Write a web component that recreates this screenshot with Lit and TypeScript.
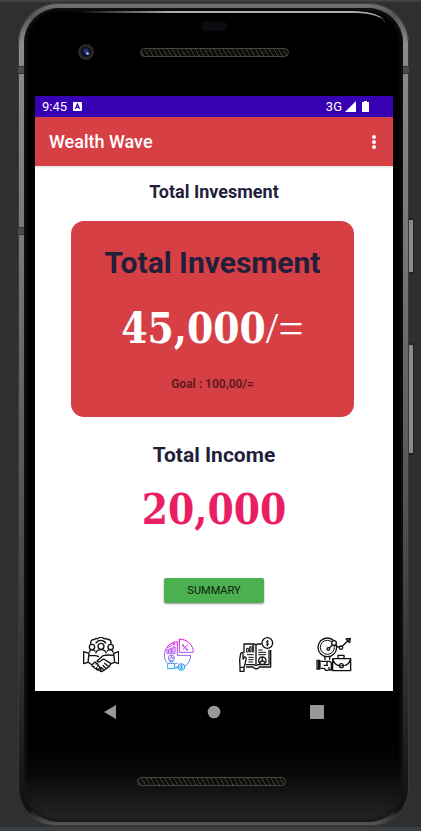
import { LitElement, html, css, svg } from "lit";
import { customElement } from "lit/decorators.js";

const handshake = svg`
  <g stroke-width="4">
    <path d="M63 57c-3-6 1-11 6-14 4 3 7-1 9-3 4 2 6 2 8-1 4-3 9-3 13 0 2 3 5 3 8 1 3 3 5 5 10 3 5 3 8 8 5 14"/>
    <path d="M77 55c4-7 9-9 15-9s12 3 16 9"/>
    <circle cx="93" cy="64" r="9"/><circle cx="66" cy="66" r="8"/><circle cx="122" cy="66" r="8"/>
    <path d="M77 85c2-7 7-11 16-11s14 4 16 11M57 83c1-4 3-8 9-9 5 0 8 2 10 5M130 83c-1-4-3-8-9-9-5 0-8 2-10 5"/>
    <path d="M41 80l16 5-3 27-13 4zM146 80l-15 5 3 27 12 4z"/>
    <path d="M57 92h20l10 3M54 111l12 9M131 91c-14-2-24-1-32 1l-18 16c3 5 9 3 13-2l7-4 22 14-6 9-15 11-8 4-8-5-9-2"/>
    <path d="M66 120l7-8c5-2 7 2 5 5 5-2 9 1 5 6 5-1 8 3 5 7 5 0 7 4 3 8M66 120c0 5 3 6 6 4-1 6 4 8 8 4 0 6 4 7 8 3M123 116l11-4M103 114l13 11M98 121l11 10M92 126l10 9"/>
  </g>`;

const analytics = svg`
  <defs>
    <linearGradient id="tint" gradientUnits="userSpaceOnUse" x1="325" y1="40" x2="325" y2="138">
      <stop offset="0" stop-color="#f400e0"/><stop offset=".5" stop-color="#a05cf0"/>
      <stop offset="1" stop-color="#00b4e6"/>
    </linearGradient>
  </defs>
  <g stroke="url(#tint)" stroke-width="3">
    <path d="M322 50c-22 1-38 18-39 40 0 9 3 17 8 23M322 50v41h40c0 14-7 26-17 32M316 126h14"/>
    <path d="M328 42v40h42c0-22-18-39-42-40z"/>
    <path d="M338 61l14 13M353 60l-15 14"/><circle cx="339" cy="61" r="2"/><circle cx="351" cy="74" r="2"/>
    <path d="M291 86v-12h5v12zM300 86v-16h5v16zM309 86v-20h6v20zM292 68l12-6 8-6M308 55h6v6"/>
    <circle cx="304" cy="99" r="9"/><path d="M304 91v8h8M299 103l5-4"/>
    <path d="M293 115h20v16h-20zM313 118c6-4 8-4 12-1M313 129h10M298 110h12"/>
    <circle cx="334" cy="126" r="10"/><path d="M338 121c-6-3-9 3-4 4 7 1 5 8-4 5M334 118v16"/>
  </g>`;

const report = svg`
  <g stroke-width="4">
    <path d="M57 84V57h32l4 4 4-4h13M132 74v45M137 75v51h-35c-1 7-15 7-17 0H63M93 61v57M62 119h27l4 3 4-3h35"/>
    <circle cx="127" cy="54" r="16"/><path d="M131 49c-6-4-10 4-4 5 7 1 4 9-4 5M127 45v19" stroke-width="3"/>
    <path d="M65 81V70h5v11zM74 81V65h4v16zM82 81V61h4v20z" stroke-width="3"/>
    <path d="M66 89h20M70 97h16M70 104h16M70 111h14M100 75h13M100 82h23M100 89h23" stroke-width="3"/>
    <circle cx="112" cy="107" r="11"/><path d="M112 96v11l9 5M112 107l-9 6"/>
    <path d="M45 139v-14l-1-21 3-18c3-6 8-3 7 3v13l3-4c4-5 8 0 6 5l-3 14-3 10v12zM45 127h12"/>
  </g>`;

const career = svg`
  <g stroke-width="4">
    <circle cx="307" cy="67" r="28"/><circle cx="307" cy="67" r="21" stroke-width="3"/>
    <circle cx="310" cy="72" r="4"/><path d="M313 69l10-10"/>
    <path d="M331 60c4 5 8 6 12 7M352 64l22-22"/>
    <circle cx="327" cy="54" r="7" fill="#fff"/><circle cx="348" cy="68" r="5" fill="#fff"/>
    <path d="M363 42l13-2-2 13zM300 95v10M314 95v9"/>
    <path d="M276 106h9v26h-9zM288 109h26l5 4v22h-7v-9M288 130h10l4 6h8M296 121h13M306 109v12M281 106v26"/>
    <path d="M323 101h54v36h-54zM339 100v-9h18v9M323 102c4 14 10 18 19 20M377 102c-4 14-10 18-19 20"/>
    <circle cx="349" cy="122" r="6"/><path d="M343 122h12" stroke-width="3"/>
  </g>`;

const shortcuts = [
  { label: "Partners", box: "39 36 108 108", art: handshake },
  { label: "Analytics", box: "273 36 108 108", art: analytics },
  { label: "Reports", box: "39 36 108 108", art: report },
  { label: "Career", box: "273 36 108 108", art: career },
];

@customElement("wealth-screen")
class WealthScreen extends LitElement {
  static styles = css`
    :host { display: flex; flex-direction: column; flex: 1; background: #fff; color: #231f3b; }
    * { box-sizing: border-box; }
    h1, h2, p { margin: 0; }
    button { border: 0; padding: 0; background: none; font: inherit; color: inherit; }
    svg { display: block; }
    .status { display: flex; align-items: center; height: 21px; padding: 0 24px 0 7px; background: #3700b3; color: #fff; font-size: 13px; line-height: 20px; }
    .status .app { margin-left: 6px; }
    .status .net { margin-left: auto; }
    .status .signal { margin-left: 3px; }
    .status .battery { margin-left: 6px; }
    .bar { display: flex; align-items: center; justify-content: space-between; height: 49px; padding: 0 8px 0 14px; background: #d64045; color: #fff; box-shadow: 0 1px 3px #0002; }
    .bar h1 { font-size: 18px; line-height: 24px; font-weight: 500; }
    .more { display: flex; justify-content: center; width: 22px; height: 24px; align-items: center; }
    main { display: flex; flex: 1; flex-direction: column; align-items: center; text-align: center; }
    h2 { font-weight: 700; }
    .heading { margin-top: 14px; font-size: 18px; line-height: 24px; }
    .card { align-self: stretch; margin: 17px 39px 0 36px; height: 196px; padding-top: 24px; border-radius: 13px; background: #d64045; }
    .card h2 { font-size: 30px; line-height: 36px; }
    .figure { font: 700 42px/48px "DejaVu Serif Condensed", "DejaVu Serif", serif; }
    .card .figure { margin-top: 23px; color: #fff; }
    .unit { font: 400 45px/48px "Liberation Serif", serif; }
    .goal { margin-top: 23px; font-size: 12px; line-height: 16px; font-weight: 700; color: #5f1a20; }
    .income { margin-top: 24px; font-size: 21px; line-height: 28px; }
    .total { margin-top: 17px; color: #e91e63; }
    .summary { margin-top: 44px; width: 100px; height: 25px; border-radius: 2px; background: #4caf50; color: #0c200d; font-size: 11px; font-weight: 400; box-shadow: 0 1px 2px #0006; }
    nav { display: flex; align-self: stretch; justify-content: space-between; margin: auto 0 18px; padding: 0 41px 0 48px; }
    nav svg { width: 36px; height: 36px; fill: none; stroke: #111; stroke-linejoin: round; }
  `;

  render() {
    return html`
      <div class="status">
        <span>9:45</span>
        <svg class="app" width="9" height="9" viewBox="0 0 9 9"><rect width="9" height="9" rx="1" fill="#fff"/><path d="M2.4 7l2.1-5 2.1 5M3.2 5.4h2.6" fill="none" stroke="#3700b3" stroke-width="1.2"/></svg>
        <span class="net">3G</span>
        <svg class="signal" width="11" height="11" viewBox="0 0 11 11"><path d="M11 0v11H0z" fill="#fff"/></svg>
        <svg class="battery" width="7" height="11" viewBox="0 0 7 11"><path d="M2 0h3v1h2v10H0V1h2z" fill="#fff"/></svg>
      </div>
      <header class="bar">
        <h1>Wealth Wave</h1>
        <button class="more" aria-label="More options">
          <svg width="4" height="14" viewBox="0 0 4 14" fill="#fff"><circle cx="2" cy="2" r="2"/><circle cx="2" cy="7" r="2"/><circle cx="2" cy="12" r="2"/></svg>
        </button>
      </header>
      <main>
        <h2 class="heading">Total Invesment</h2>
        <section class="card">
          <h2>Total Invesment</h2>
          <p class="figure">45,000<span class="unit">/=</span></p>
          <p class="goal">Goal : 100,00/=</p>
        </section>
        <h2 class="income">Total Income</h2>
        <p class="figure total">20,000</p>
        <button class="summary">SUMMARY</button>
        <nav>
          ${shortcuts.map((s) => html`<button aria-label=${s.label}><svg viewBox=${s.box}>${s.art}</svg></button>`)}
        </nav>
      </main>
    `;
  }
}

@customElement("app-root")
class AppRoot extends LitElement {
  static styles = css`
    :host { display: flex; box-sizing: border-box; min-height: 100vh; padding: 3px 12px 5px 18px; background: linear-gradient(#47494b, #2e2f31 3px, #2e2f31 calc(100% - 4px), #3c3f41 calc(100% - 4px)); font-family: Roboto, "Liberation Sans", sans-serif; }
    * { box-sizing: border-box; }
    .phone { position: relative; display: flex; flex: 1; padding: 5px 6px 4px; border-radius: 40px 40px 38px 38px; background: linear-gradient(#777, #555 12px, #8b8b8b 40px, #777 30%, #555 60%, #333 80%, #191919 93%, #111 98%, #625e5e); box-shadow: inset 0 0 0 1px #3a3a3a; }
    .key { position: absolute; left: 100%; width: 5px; border: 1px solid #222; border-width: 2px 1px 2px 0; border-radius: 0 2px 2px 0; background: #8a8a8a; }
    .power { top: 215px; height: 56px; }
    .volume { top: 340px; height: 112px; }
    .seam { position: absolute; height: 8px; width: 6px; background: #4a4a4a; border: solid #333; border-width: 1px 0; }
    .left { left: 0; top: 63px; }
    .right { right: 0; top: 63px; }
    .lower { left: 0; top: 224px; }
    .body { display: flex; flex: 1; flex-direction: column; min-width: 0; padding: 0 10px 0 11px; border-radius: 35px; background: linear-gradient(#000 90%, #080808 94%, #262626); box-shadow: inset 0 0 4px 2px #161616; position: relative; }
    .shine { position: absolute; top: 3px; left: 52px; right: 18px; height: 12px; border-top: 2px solid #aaa; border-top-right-radius: 30px 12px; -webkit-mask: linear-gradient(90deg, transparent, #000 30%); mask: linear-gradient(90deg, transparent, #000 30%); }
    .top { display: grid; grid-template-columns: 1fr 150px 1fr; grid-template-rows: 22px 16px; align-content: start; align-items: center; height: 88px; padding-top: 7px; row-gap: 7px; }
    .sensor { grid-column: 2; justify-self: center; width: 26px; height: 10px; border-radius: 5px; background: #0a0b10; }
    .camera { grid-column: 1; grid-row: 2; margin-left: 43px; width: 16px; height: 16px; }
    .speaker { display: block; width: 149px; height: 9px; border: 1px solid #48463f; border-radius: 5px; background: repeating-linear-gradient(60deg, #0d0d0c 0 2px, #38352e 2px 3px, #0d0d0c 3px 4px); }
    .top .speaker { grid-column: 2; grid-row: 2; justify-self: center; }
    .keys { display: flex; justify-content: space-between; align-items: center; height: 42px; padding: 0 69px 0 68px; }
    .keys button { width: 14px; height: 14px; padding: 0; border: 0; background: none; }
    .keys svg { display: block; fill: #999; }
    .chin { display: flex; justify-content: center; height: 89px; padding: 44px 5px 0 0; }
  `;

  render() {
    return html`
      <div class="phone">
        <i class="seam left"></i><i class="seam right"></i><i class="seam lower"></i>
        <i class="key power"></i><i class="key volume"></i>
        <div class="body">
          <i class="shine"></i>
          <div class="top">
            <i class="sensor"></i>
            <svg class="camera" viewBox="0 0 16 16"><circle cx="8" cy="8" r="8" fill="#262626"/><circle cx="8" cy="8" r="5" fill="#0c0e1c"/><circle cx="8" cy="7" r="2.5" fill="#25377e"/><circle cx="9.5" cy="9.5" r="1.6" fill="#8fa0ee"/></svg>
            <i class="speaker"></i>
          </div>
          <wealth-screen></wealth-screen>
          <div class="keys">
            <button aria-label="Back"><svg width="14" height="14" viewBox="0 0 14 14"><path d="M13 0v14L1 7z"/></svg></button>
            <button aria-label="Home"><svg width="14" height="14" viewBox="0 0 14 14"><circle cx="7" cy="7" r="6.3"/></svg></button>
            <button aria-label="Recent apps"><svg width="14" height="14" viewBox="0 0 14 14"><rect width="14" height="14" rx="1"/></svg></button>
          </div>
          <div class="chin"><i class="speaker"></i></div>
        </div>
      </div>
    `;
  }
}
